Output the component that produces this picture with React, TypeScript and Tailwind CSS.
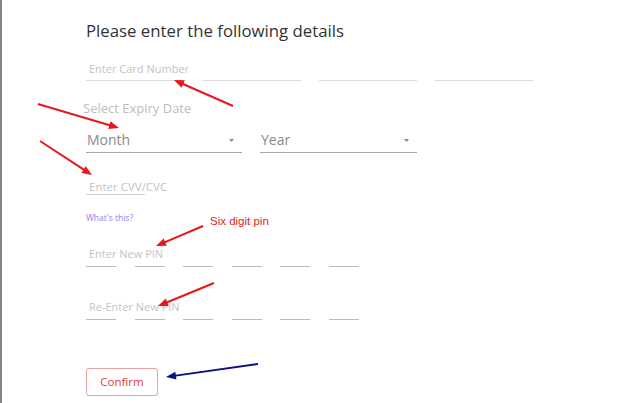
import React from 'react';

type Arrow = { x1: number; y1: number; x2: number; y2: number; color: string };

const arrows: Arrow[] = [
  { x1: 233, y1: 106, x2: 174, y2: 80, color: '#e8171b' },
  { x1: 38, y1: 104, x2: 119, y2: 128, color: '#e8171b' },
  { x1: 40, y1: 141, x2: 92, y2: 175, color: '#e8171b' },
  { x1: 203, y1: 226, x2: 156, y2: 246, color: '#e8171b' },
  { x1: 214, y1: 283, x2: 158, y2: 306, color: '#e8171b' },
  { x1: 258, y1: 364, x2: 166, y2: 377, color: '#0d1080' },
];

function head(a: Arrow) {
  const dx = a.x2 - a.x1;
  const dy = a.y2 - a.y1;
  const len = Math.hypot(dx, dy);
  const ux = dx / len;
  const uy = dy / len;
  const L = 10;
  const W = 4;
  const bx = a.x2 - ux * L;
  const by = a.y2 - uy * L;
  return {
    line: { x2: bx + ux * 2, y2: by + uy * 2 },
    points: `${a.x2},${a.y2} ${bx - uy * W},${by + ux * W} ${bx + uy * W},${by - ux * W}`,
  };
}

const Caret = () => (
  <svg width="5" height="4" viewBox="0 0 5 4" className="absolute right-[8px] top-[9px]">
    <polygon points="0,0 5,0 2.5,3" fill="#8a8a8a" />
  </svg>
);

const pinCells = [0, 1, 2, 3, 4, 5];

export default function App() {
  return (
    <div
      className="relative w-[640px] h-[403px] overflow-hidden bg-white border-l-2 border-[#858585]"
      style={{ fontFamily: '"Open Sans", "Noto Sans", sans-serif' }}
    >
      <div className="pl-[84px] pt-[19px]">
        <h1 className="text-[16.8px] leading-[24px] text-[#333] font-normal">
          Please enter the following details
        </h1>

        {/* card number */}
        <div className="flex gap-[18px] mt-[19px]">
          <div className="w-[99px] border-b border-[#dcdcdc] pb-[4px] pl-[3px] text-[11px] leading-[14px] text-[#c4c4c4] whitespace-nowrap">
            Enter Card Number
          </div>
          <div className="w-[98px] border-b border-[#dcdcdc]" />
          <div className="w-[98px] border-b border-[#dcdcdc]" />
          <div className="w-[98px] border-b border-[#dcdcdc]" />
        </div>

        <div className="mt-[18px] -ml-[3px] text-[13px] leading-[18px] text-[#bdbdbd]">
          Select Expiry Date
        </div>

        {/* expiry selects */}
        <div className="flex gap-[18px] mt-[13px]">
          <div className="relative w-[156px] border-b border-[#a8a8a8] pb-[2px] pl-[1px] text-[14px] leading-[20px] text-[#8a8a8a]">
            Month
            <Caret />
          </div>
          <div className="relative w-[157px] border-b border-[#a8a8a8] pb-[2px] pl-[1px] text-[14px] leading-[20px] text-[#8a8a8a]">
            Year
            <Caret />
          </div>
        </div>

        {/* cvv */}
        <div className="mt-[26px] w-[59px] border-b border-[#cfcfcf] pl-[3px] text-[11.5px] leading-[15px] text-[#c4c4c4] whitespace-nowrap">
          Enter CVV/CVC
        </div>

        <div className="mt-[18px] text-[8.5px] leading-[10px] text-[#8c80e6]">What's this?</div>

        {/* new pin */}
        <div className="mt-[24px]">
          <div className="pl-[3px] text-[11px] leading-[14px] text-[#c4c4c4]">Enter New PIN</div>
          <div className="flex gap-[18.6px]">
            {pinCells.map((i) => (
              <div key={i} className="w-[30px] h-[6px] border-b border-[#bcbcbc]" />
            ))}
          </div>
        </div>

        <div className="mt-[33px]">
          <div className="pl-[3px] text-[11px] leading-[14px] text-[#c4c4c4]">Re-Enter New PIN</div>
          <div className="flex gap-[18.6px]">
            {pinCells.map((i) => (
              <div key={i} className="w-[30px] h-[6px] border-b border-[#bcbcbc]" />
            ))}
          </div>
        </div>

        <button className="mt-[48px] w-[72px] h-[28px] border border-[#eaa3a3] rounded-[3px] text-[11.5px] text-[#e0393b] bg-white">
          Confirm
        </button>
      </div>

      {/* annotations */}
      <div
        className="absolute left-[208px] top-[214px] text-[11.5px] leading-[14px] text-[#e01e1e]"
        style={{ fontFamily: '"Liberation Sans", sans-serif' }}
      >
        Six digit pin
      </div>
      <svg className="absolute left-[-2px] top-0" width="640" height="403">
        {arrows.map((a, i) => {
          const h = head(a);
          return (
            <g key={i}>
              <line x1={a.x1} y1={a.y1} x2={h.line.x2} y2={h.line.y2} stroke={a.color} strokeWidth="2" />
              <polygon points={h.points} fill={a.color} />
            </g>
          );
        })}
      </svg>
    </div>
  );
}
